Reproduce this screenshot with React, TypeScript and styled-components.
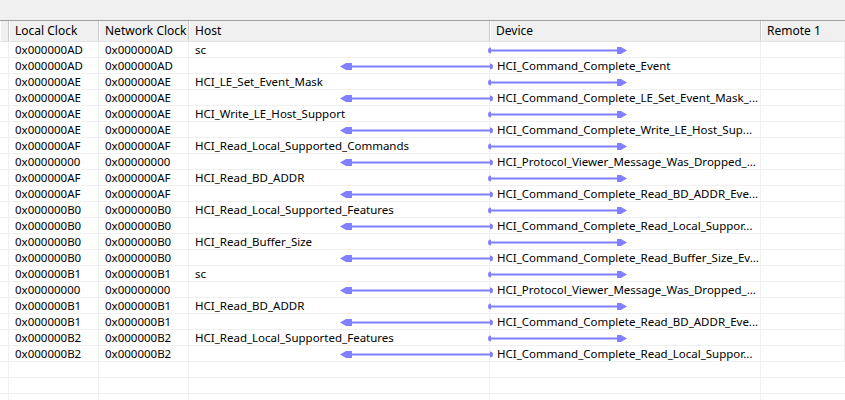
import React from "react";
import styled, { createGlobalStyle } from "styled-components";

const Global = createGlobalStyle`
  html, body { margin: 0; padding: 0; background: #fff; }
  body { font-family: "Noto Sans", "Open Sans", sans-serif; font-size: 11.5px; color: #000; overflow: hidden; }
`;

const COLS = "9px 90px 90px 301px 271px 1fr";

const Page = styled.div`
  width: 845px;
  height: 400px;
  overflow: hidden;
  display: flex;
  flex-direction: column;
  background: #fff;
`;

const TopBar = styled.div`
  height: 20px;
  flex: none;
  background: #f0f0f0;
  border-bottom: 1px solid #a0a0a0;
`;

const Header = styled.div`
  display: grid;
  grid-template-columns: ${COLS};
  height: 21px;
  flex: none;
  background: #f0f0f0;
  border-bottom: 1px solid #e3e3e3;
  box-sizing: border-box;
  font-size: 12px;
`;

const HeadCell = styled.div`
  box-sizing: border-box;
  border-right: 1px solid #c9c9c9;
  box-shadow: inset 1px 0 0 #ffffff;
  padding-left: 6px;
  display: flex;
  align-items: center;
  white-space: nowrap;
  overflow: hidden;
  line-height: 16px;
  &:last-child { border-right: none; }
`;

const Body = styled.div`
  flex: 1;
  overflow: hidden;
`;

const Row = styled.div`
  position: relative;
  display: grid;
  grid-template-columns: ${COLS};
  height: 16px;
  box-sizing: border-box;
  border-bottom: 1px solid #f0f0f0;
`;

const Cell = styled.div`
  box-sizing: border-box;
  border-right: 1px solid #f0f0f0;
  padding-left: 6px;
  white-space: nowrap;
  overflow: visible;
  line-height: 15px;
  &:last-child { border-right: none; }
`;

const DeviceCell = styled(Cell)`
  padding-left: 7px;
  overflow: hidden;
`;

const ArrowSvg = styled.svg<{ $left: number }>`
  position: absolute;
  top: 4px;
  left: ${(p) => p.$left}px;
  pointer-events: none;
`;

const BLUE = "#8080ff";

function RightArrow() {
  return (
    <ArrowSvg $left={487} width={142} height={9} viewBox="0 0 142 9">
      <path d="M4 1.5 A3 3 0 0 0 4 7.5 Z" fill={BLUE} />
      <rect x="3" y="3.5" width="130" height="2" fill={BLUE} />
      <polygon points="130,1 134,1 140,4.5 134,8 130,8" fill={BLUE} />
    </ArrowSvg>
  );
}

function LeftArrow() {
  return (
    <ArrowSvg $left={338} width={156} height={9} viewBox="0 0 156 9">
      <polygon points="2,4.5 8,1 14,1 14,8 8,8" fill={BLUE} />
      <rect x="10" y="3.5" width="142" height="2" fill={BLUE} />
      <path d="M152 1.5 A3 3 0 0 1 152 7.5 Z" fill={BLUE} />
    </ArrowSvg>
  );
}

type Entry = { c: string; n?: string; host?: string; dev?: string; dir: "r" | "l" };

const rows: Entry[] = [
  { c: "0x000000AD", host: "sc", dir: "r" },
  { c: "0x000000AD", dev: "HCI_Command_Complete_Event", dir: "l" },
  { c: "0x000000AE", host: "HCI_LE_Set_Event_Mask", dir: "r" },
  { c: "0x000000AE", dev: "HCI_Command_Complete_LE_Set_Event_Mask_...", dir: "l" },
  { c: "0x000000AE", host: "HCI_Write_LE_Host_Support", dir: "r" },
  { c: "0x000000AE", dev: "HCI_Command_Complete_Write_LE_Host_Sup...", dir: "l" },
  { c: "0x000000AF", host: "HCI_Read_Local_Supported_Commands", dir: "r" },
  { c: "0x00000000", dev: "HCI_Protocol_Viewer_Message_Was_Dropped_...", dir: "l" },
  { c: "0x000000AF", host: "HCI_Read_BD_ADDR", dir: "r" },
  { c: "0x000000AF", dev: "HCI_Command_Complete_Read_BD_ADDR_Eve...", dir: "l" },
  { c: "0x000000B0", host: "HCI_Read_Local_Supported_Features", dir: "r" },
  { c: "0x000000B0", dev: "HCI_Command_Complete_Read_Local_Suppor...", dir: "l" },
  { c: "0x000000B0", host: "HCI_Read_Buffer_Size", dir: "r" },
  { c: "0x000000B0", dev: "HCI_Command_Complete_Read_Buffer_Size_Ev...", dir: "l" },
  { c: "0x000000B1", host: "sc", dir: "r" },
  { c: "0x00000000", dev: "HCI_Protocol_Viewer_Message_Was_Dropped_...", dir: "l" },
  { c: "0x000000B1", host: "HCI_Read_BD_ADDR", dir: "r" },
  { c: "0x000000B1", dev: "HCI_Command_Complete_Read_BD_ADDR_Eve...", dir: "l" },
  { c: "0x000000B2", host: "HCI_Read_Local_Supported_Features", dir: "r" },
  { c: "0x000000B2", dev: "HCI_Command_Complete_Read_Local_Suppor...", dir: "l" },
];

export default function App() {
  return (
    <Page>
      <Global />
      <TopBar />
      <Header>
        <HeadCell />
        <HeadCell>Local Clock</HeadCell>
        <HeadCell>Network Clock</HeadCell>
        <HeadCell>Host</HeadCell>
        <HeadCell>Device</HeadCell>
        <HeadCell>Remote 1</HeadCell>
      </Header>
      <Body>
        {rows.map((r, i) => (
          <Row key={i}>
            <Cell />
            <Cell>{r.c}</Cell>
            <Cell>{r.n ?? r.c}</Cell>
            <Cell>{r.host ?? ""}</Cell>
            <DeviceCell>{r.dev ?? ""}</DeviceCell>
            <Cell />
            {r.dir === "r" ? <RightArrow /> : <LeftArrow />}
          </Row>
        ))}
        {Array.from({ length: 4 }).map((_, i) => (
          <Row key={"e" + i}>
            <Cell />
            <Cell />
            <Cell />
            <Cell />
            <Cell />
            <Cell />
          </Row>
        ))}
      </Body>
    </Page>
  );
}
